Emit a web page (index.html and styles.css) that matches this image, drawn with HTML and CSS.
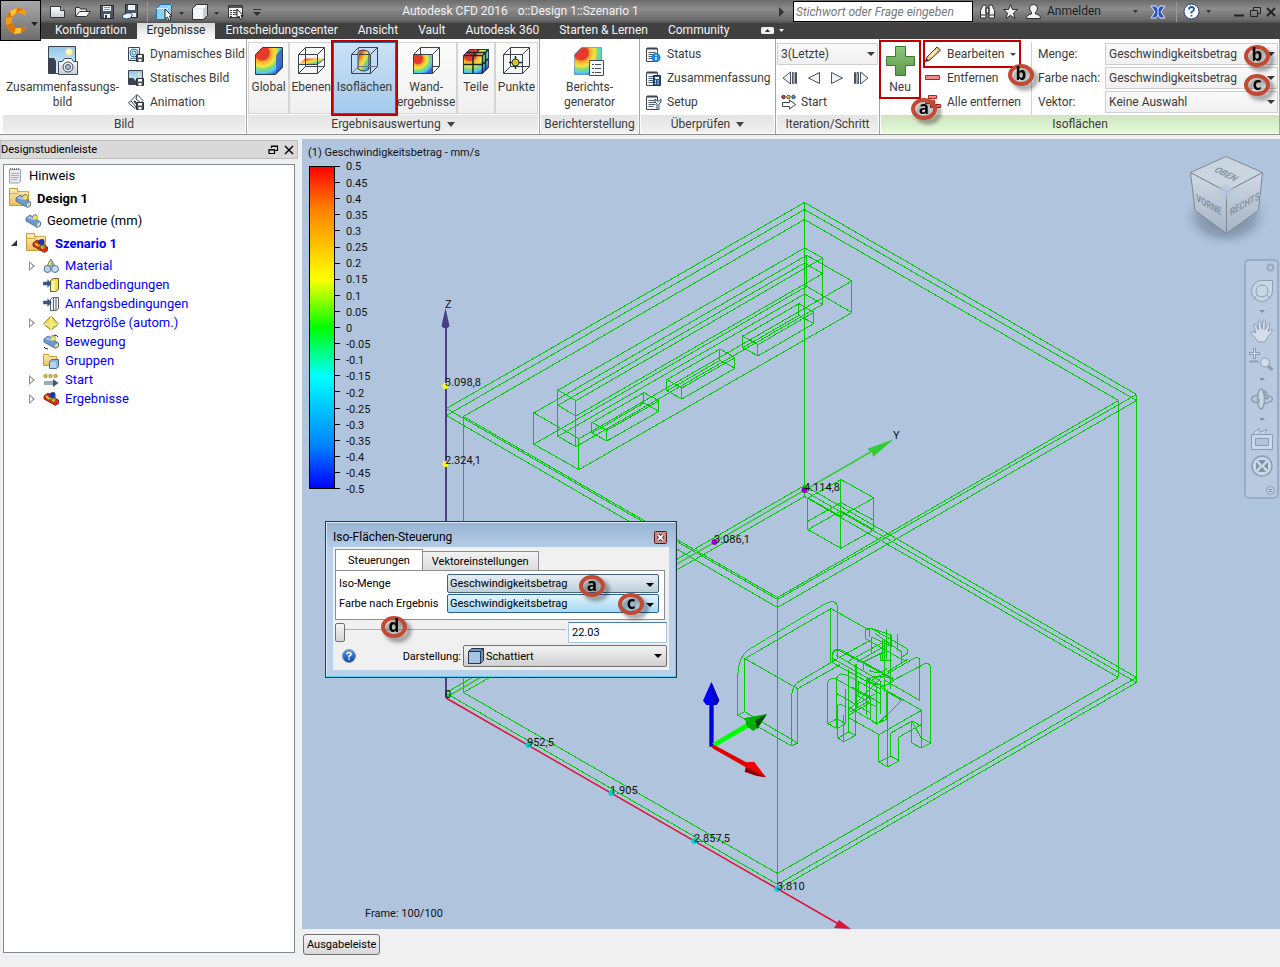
FILE: index.html
```html
<!DOCTYPE html>
<html lang="de">
<head>
<meta charset="utf-8">
<meta name="viewport" content="width=device-width, initial-scale=1">
<title>Autodesk CFD 2016</title>
<link rel="stylesheet" href="styles.css">
</head>
<body class="app">
<svg class="defs" aria-hidden="true">
  <defs>
    <linearGradient id="rainbow" x1="0" y1="0" x2="1" y2="1">
      <stop offset="0" stop-color="#f5a623"/><stop offset=".2" stop-color="#e8402c"/><stop offset=".38" stop-color="#ffb52b"/>
      <stop offset=".52" stop-color="#f4e542"/><stop offset=".66" stop-color="#7ad66f"/><stop offset=".8" stop-color="#4cc3ee"/><stop offset="1" stop-color="#2446c8"/>
    </linearGradient>
    <radialGradient id="heat" cx=".25" cy=".2" r="1">
      <stop offset="0" stop-color="#e5392b"/><stop offset=".25" stop-color="#e5392b"/><stop offset=".32" stop-color="#f7a828"/>
      <stop offset=".5" stop-color="#f6e545"/><stop offset=".62" stop-color="#7ddc74"/><stop offset=".74" stop-color="#55cdf0"/><stop offset=".9" stop-color="#2d62dc"/>
    </radialGradient>
    <linearGradient id="silver" x1="0" y1="0" x2="0" y2="1"><stop offset="0" stop-color="#fff"/><stop offset="1" stop-color="#c9ced4"/></linearGradient>
    <linearGradient id="sky" x1="0" y1="0" x2="0" y2="1"><stop offset="0" stop-color="#8fc6ea"/><stop offset="1" stop-color="#e9f5fb"/></linearGradient>
    <linearGradient id="leaf" x1="0" y1="0" x2="0" y2="1"><stop offset="0" stop-color="#8cc57c"/><stop offset="1" stop-color="#5d9a4b"/></linearGradient>
    <linearGradient id="folderfill" x1="0" y1="0" x2="0" y2="1"><stop offset="0" stop-color="#fdf0b9"/><stop offset="1" stop-color="#e9bf5c"/></linearGradient>
    <linearGradient id="legendfill" x1="0" y1="0" x2="0" y2="1">
      <stop offset="0" stop-color="#f00"/><stop offset=".13" stop-color="#ff8000"/><stop offset=".35" stop-color="#ff0"/><stop offset=".5" stop-color="#0f0"/>
      <stop offset=".65" stop-color="#0ff"/><stop offset=".87" stop-color="#0080ff"/><stop offset="1" stop-color="#00f"/>
    </linearGradient>
    <linearGradient id="cubefill" x1="0" y1="0" x2="0" y2="1"><stop offset="0" stop-color="#d0d9e4"/><stop offset="1" stop-color="#a6b4c5"/></linearGradient>
    <radialGradient id="cubeshadow"><stop offset="0" stop-color="#5c6b7d" stop-opacity=".9"/><stop offset=".6" stop-color="#74869b" stop-opacity=".55"/><stop offset="1" stop-color="#b0c4de" stop-opacity="0"/></radialGradient>
    <linearGradient id="question" x1="0" y1="0" x2="0" y2="1"><stop offset="0" stop-color="#5b9be8"/><stop offset="1" stop-color="#123fa5"/></linearGradient>
    <symbol id="disk" viewBox="0 0 8 8"><path d="M.5 .5h7v7h-7z" fill="#4a525c" stroke="#2c333d"/><path d="M2 1h4v2.500H2zM2.500 5h3v2.500h-3z" fill="#fff"/></symbol>
    <symbol id="notes" viewBox="0 0 16 16"><path d="M1.500 2.500h11v13h-11z" fill="#f4f4f4" stroke="#3c4450"/><path d="M3 1v3M5 1v3M7 1v3M9 1v3M11 1v3" stroke="#3c4450"/><path d="M3.500 6.500h7M3.500 8.500h7M3.500 10.500h7M3.500 12.500h5" stroke="#555e6b"/></symbol>
    <symbol id="folder" viewBox="0 0 23 22"><path d="M1.500 18.500v-17h8v3h11v14z" fill="url(#folderfill)" stroke="#c99a3c"/><path d="M2 6.500h8l1.500-2H20" fill="none" stroke="#d5aa50"/></symbol>
    <symbol id="part" viewBox="0 0 16 14"><path d="M1 4L5 1l3 2V1.500l2-1 2 1V6l3.500 2v3.500l-3 2L1 7z" fill="#6f98cf" stroke="#44628f" stroke-width=".8"/><path d="M8 2l2-1 2 1v3l-2 1-2-1z" fill="#f3e14a"/><path d="M12 10l3-2v3l-3 2z" fill="#f5e556"/><path d="M2 4l3-2 3 2v2z" fill="#a9c3e4"/></symbol>
    <symbol id="hotpart" viewBox="0 0 16 14"><path d="M1 4L5 1l3 2V1.500l2-1 2 1V6l3.500 2v3.500l-3 2L1 7z" fill="#df2b12" stroke="#6b1c10" stroke-width=".8"/><path d="M6 2l2-1.500h4V5l-2 1-3-1z" fill="#1734b8"/><path d="M5 5l3 1 1 2-3-1zM11 6l2 2-2 2-2-3z" fill="#48d657"/><path d="M3 4l2 1 1 2-2-1zM9 8l2 2" fill="#ffd52d" stroke="#ffd52d"/></symbol>
    <symbol id="bc" viewBox="0 0 16 14"><path d="M0 4.500h5V1.500l5 5-5 5V8.500H0z" fill="#37587a"/></symbol>
  </defs>
</svg>

<header class="shell">
  <button class="app-button" aria-label="Anwendungsmenü">
    <svg width="34" height="30" viewBox="0 0 34 30"><path d="M13 2l6 1 3 2v5l-5-3h-5l-4 4v6l4 5h5l5-2v3l-5 4-7 1-5-4-3-5V12l4-7z" fill="#f49a14"/><path d="M13 2l6 1-7 4-4 4-6 1 4-7zM8 17l4 5-2 6-5-4-3-5zM17 22l5-2v3l-5 4z" fill="#d8770b"/><path d="M6 5l7-3-1 5-4 4zM12 22h5v5l-7 1z" fill="#ffc132"/><path d="M27 16h7l-3.500 4z" fill="#222"/></svg>
  </button>
  <div class="titlebar">
    <div class="quick">
      <button aria-label="Neu"><svg width="18" height="16"><path d="M1.500 2.500h10l4 4v7h-14z" fill="url(#silver)" stroke="#333"/><path d="M11.500 2.500v4h4" fill="#bbb" stroke="#333"/></svg></button>
      <button aria-label="Öffnen"><svg width="18" height="16"><path d="M1.500 12.500v-9h4l1 1.500h6v3" fill="#e8e8e8" stroke="#333"/><path d="M1.500 12.500l4-5h11l-4 5z" fill="#f6f6f6" stroke="#333"/></svg></button>
      <button aria-label="Speichern"><svg width="16" height="16"><path d="M1.500 1.500h13v13h-13z" fill="#4b5663" stroke="#222b36"/><path d="M4 2h8v5H4zM5 10h6v4H5z" fill="#eef1f4"/><path d="M5 3.500h6M5 5.500h6" stroke="#8a929c"/><path d="M6 11h2v3H6z" fill="#333"/></svg></button>
      <button aria-label="Speichern unter"><svg width="18" height="16"><path d="M3.500 .500h12v13h-12z" fill="#4b5663" stroke="#222b36"/><path d="M6 1h7v5H6zM8 9h6v4H8z" fill="#eef1f4"/><path d="M.5 11l5-2h3l2 2-2 3-4 1-4-1z" fill="#e9f2fb" stroke="#1e4c79"/></svg></button>
      <span class="bar"></span>
      <button class="wide" aria-label="Auswahl"><svg width="28" height="18"><path d="M1.500 5.500l4-4h11v11l-4 4h-11z" fill="#8ed0f4" stroke="#1a6ea3"/><path d="M1.500 5.500h11v11M12.500 5.500l4-4" fill="none" stroke="#d6f0fd"/><path d="M10 6v10l2.500-2 1.500 3.500 2-1L14.500 13H17z" fill="#fff" stroke="#222"/><path d="M24 9h5l-2.500 3z" fill="#333"/></svg></button>
      <button class="wide" aria-label="Darstellung"><svg width="28" height="18"><path d="M1.500 5.500l4-4h11v11l-4 4h-11z" fill="#c9cdd2" stroke="#333"/><path d="M2 6h10v10H2z" fill="#f5f6f7"/><path d="M2 5.500l4-3.500h10l-3.500 3.500z" fill="#fff"/><path d="M23 9h5l-2.500 3z" fill="#333"/></svg></button>
      <button aria-label="Liste"><svg width="18" height="16"><path d="M1.500 1.500h14v12h-14z" fill="#f2f2f2" stroke="#333"/><path d="M2 3h13" stroke="#555" stroke-width="2"/><path d="M3 6.500h2M6 6.500h5M3 8.500h2M6 8.500h4M3 10.500h2M6 10.500h4M3 12.500h2" stroke="#444"/><path d="M10 5v9l2-2 1.500 3.500 2-1-1.500-3H16z" fill="#fff" stroke="#222"/></svg></button>
      <button aria-label="Anpassen"><svg width="10" height="12"><path d="M1 3.500h8" stroke="#333"/><path d="M1 6h8L5 10z" fill="#333"/></svg></button>
    </div>
    <h1 class="caption"><span>Autodesk CFD 2016</span><span>o::Design 1::Szenario 1</span></h1>
    <div class="info">
      <svg width="6" height="10"><path d="M0 0l5 5-5 5z" fill="#333"/></svg>
      <input class="search" type="text" placeholder="Stichwort oder Frage eingeben" aria-label="Suche">
      <button aria-label="Suchen"><svg width="17" height="17"><path d="M1.500 7.500L4 2h3v13H1.500zM15.500 7.500L13 2h-3v13h5.500zM7 5h3v5H7z" fill="#f3f3f3" stroke="#2c2c2c"/><path d="M2 12h5M10 12h5" stroke="#2c2c2c"/></svg></button>
      <button aria-label="Favoriten"><svg width="17" height="17"><path d="M8.500 1.500l2 5h5l-4 3.500 1.500 5.500-4.500-3.200L4 15.500 5.500 10l-4-3.500h5z" fill="#f3f3f3" stroke="#2c2c2c"/></svg></button>
      <button class="login"><svg width="17" height="17"><path d="M1.500 15.500q0-4 5-4.500v-1.500Q4.500 7.500 4.500 5q0-3.500 4-3.500t4 3.500q0 2.500-2 4.500V11q5 .500 5 4.500z" fill="#f3f3f3" stroke="#2c2c2c"/></svg>Anmelden</button>
      <svg width="5" height="4"><path d="M0 0h5L2.500 3z" fill="#333"/></svg>
      <button class="exchange" aria-label="Exchange"><svg width="16" height="14"><path d="M1 1h5l2 3 2-3h5l-4 6 4 6h-5l-2-3-2 3H1l4-6z" fill="#2c55b8" stroke="#dde6f8"/><path d="M8 4v6" stroke="#dde6f8"/></svg></button>
      <span class="bar"></span>
      <button aria-label="Hilfe"><svg width="17" height="17"><circle cx="8.500" cy="8.500" r="7.500" fill="#fff" stroke="#26406c"/><path d="M6 6.500q0-2.500 2.500-2.500T11 6.300q0 1.500-2.500 2.700v1.500M8.500 12v1.500" fill="none" stroke="#2257b8" stroke-width="1.800"/></svg></button>
      <svg width="5" height="4"><path d="M0 0h5L2.500 3z" fill="#333"/></svg>
      <div class="winbtns">
        <button aria-label="Minimieren"><svg width="12" height="12"><path d="M1 9.500h10" stroke="#222" stroke-width="2"/></svg></button>
        <button aria-label="Wiederherstellen"><svg width="13" height="12"><path d="M4.500 5V1.500h7v6H9M1.500 4.500h7v6h-7z" fill="none" stroke="#222"/></svg></button>
        <button aria-label="Schließen"><svg width="10" height="12"><path d="M1 2l8 8M9 2l-8 8" stroke="#222" stroke-width="2"/></svg></button>
      </div>
    </div>
  </div>
  <nav class="tabs" aria-label="Registerkarten">
    <button>Konfiguration</button>
    <button class="active">Ergebnisse</button>
    <button>Entscheidungscenter</button>
    <button>Ansicht</button>
    <button>Vault</button>
    <button>Autodesk 360</button>
    <button>Starten &amp; Lernen</button>
    <button>Community</button>
    <button class="toggle" aria-label="Multifunktionsleiste minimieren"><svg width="24" height="9"><rect x="0" y="1" width="13" height="7" rx="1.500" fill="#eee"/><path d="M4 6h5L6.500 3z" fill="#333"/><path d="M18 3h5l-2.500 3z" fill="#eee"/></svg></button>
  </nav>
</header>

<section class="ribbon" aria-label="Multifunktionsleiste">
  <div class="group">
    <div class="tools">
      <button class="big plain"><svg width="32" height="30"><path d="M1.500 .500h27v27h-27z" fill="url(#sky)" stroke="#39424e"/><circle cx="22" cy="6" r="3.500" fill="#fff7d0" stroke="#f1d66a"/><path d="M2 12h5l2 3v12H2z" fill="#39424e"/><path d="M11.500 15.500h4l2-3h7l2 3h4v13h-19z" fill="url(#silver)" stroke="#444c56"/><circle cx="21" cy="21" r="5" fill="#e8eef3" stroke="#444c56"/><circle cx="21" cy="21" r="2.500" fill="#a5c5dc" stroke="#444c56"/></svg>Zusammenfassungs-<br>bild</button>
      <div class="stack">
        <button class="small"><svg width="16" height="16"><path d="M.5 1.500h11v13H.5z" fill="#eaf3fa" stroke="#39424e"/><circle cx="6" cy="7" r="4" fill="none" stroke="#2f73ae"/><circle cx="6" cy="7" r="2" fill="none" stroke="#2f73ae"/><path d="M2 13q4-2 7 0" fill="none" stroke="#2f73ae"/><use href="#disk" x="8" y="8" width="8" height="8"/></svg>Dynamisches Bild</button>
        <button class="small"><svg width="16" height="16"><path d="M.5 .500h14v14H.5z" fill="url(#sky)" stroke="#39424e"/><circle cx="11" cy="4" r="1.500" fill="#ffe486"/><path d="M1 8h4l3 3v3H1z" fill="#39424e"/><use href="#disk" x="8" y="8" width="8" height="8"/></svg>Statisches Bild</button>
        <button class="small"><svg width="16" height="16"><path d="M.5 9L9 .500l6 6-8 8z" fill="#fff" stroke="#39424e"/><path d="M3 7l5 6M9 1l-1 4 5 4" fill="none" stroke="#39424e"/><path d="M6 7l3 3" stroke="#39424e" stroke-width="2"/><use href="#disk" x="8" y="8" width="8" height="8"/></svg>Animation</button>
      </div>
    </div>
    <h2 class="strip">Bild</h2>
  </div>

  <div class="group">
    <div class="tools joined">
      <button class="big"><svg width="30" height="30"><path d="M1.500 8.500l7-7h20v20l-7 7h-20z" fill="url(#heat)" stroke="#2d3a5c"/><path d="M22 9l6-7v19l-6 7z" fill="#2d54cc" opacity=".75"/></svg>Global</button>
      <button class="big"><svg width="30" height="30"><path d="M2.500 18.500l7-6h18l-7 6z" fill="url(#rainbow)"/><path d="M2.500 8.500l7-7h19l-7 7zM2.500 8.500v19h19v-19M28.500 1.500v19l-7 7M9.500 1.500v19h19M9.500 20.500l-7 7M2.500 18.500h19l7-6" fill="none" stroke="#3a4350"/></svg>Ebenen</button>
      <button class="big pressed"><svg width="30" height="30"><path d="M9 6q5-4 11 0v17q-5 4-11 0z" fill="url(#rainbow)" stroke="#33394a"/><path d="M2.500 8.500l7-7h19l-7 7zM2.500 8.500v19h19v-19M28.500 1.500v19l-7 7" fill="none" stroke="#3a4350"/><path d="M9.500 1.500v19h19M9.500 20.500l-7 7" fill="none" stroke="#6f7885"/></svg>Isoflächen</button>
      <button class="big"><svg width="30" height="30"><path d="M2 9h19v19H2z" fill="url(#heat)"/><path d="M2.500 8.500l7-7h19l-7 7zM2.500 8.500v19h19v-19M28.500 1.500v19l-7 7" fill="none" stroke="#3a4350"/><path d="M9.500 1.500v7M21.500 20.500h7" stroke="#3a4350"/></svg>Wand-<br>ergebnisse</button>
      <button class="big"><svg width="30" height="30"><path d="M2.500 9.500l6-6h19v18l-6 6h-19z" fill="url(#heat)" stroke="#2d3a5c"/><path d="M2.500 9.500h19v18M21.500 9.500l6-6M12 27V9.500l6-6M2.500 18.500h19l6-6M5.500 6.500h19v18" fill="none" stroke="#1e2633" stroke-width="1.500"/></svg>Teile</button>
      <button class="big"><svg width="30" height="30"><path d="M2.500 8.500l7-7h19l-7 7zM2.500 8.500v19h19v-19M28.500 1.500v19l-7 7M9.500 1.500v19h19M9.500 20.500l-7 7" fill="none" stroke="#3a4350"/><path d="M14.500 10v13M8 16.500h13" stroke="#222" stroke-width="1.500"/><circle cx="14.500" cy="16.500" r="3.500" fill="#c3e24a" stroke="#222"/><circle cx="14.500" cy="16.500" r="1.500" fill="#f39c1f"/></svg>Punkte</button>
    </div>
    <h2 class="strip drop">Ergebnisauswertung</h2>
  </div>

  <div class="group">
    <div class="tools center">
      <button class="big plain"><svg width="30" height="30"><path d="M.5 8.500l7-7h20v16l-7 11h-20z" fill="url(#heat)" stroke="#2d62dc" stroke-width=".5"/><path d="M15.500 14.500h14v15h-14z" fill="#f3f5f7" stroke="#444c56"/><path d="M18 18.500h2M21 18.500h6M18 22.500h2M21 22.500h6M18 26.500h2M21 26.500h6" stroke="#444c56"/></svg>Berichts-<br>generator</button>
    </div>
    <h2 class="strip">Berichterstellung</h2>
  </div>

  <div class="group">
    <div class="tools inset">
      <div class="stack">
        <button class="small"><svg width="16" height="16"><use href="#notes"/><circle cx="11" cy="11.500" r="4.500" fill="#1b87e6"/><path d="M11 9v1M11 11v3" stroke="#fff" stroke-width="1.500"/></svg>Status</button>
        <button class="small"><svg width="16" height="16"><use href="#notes"/><path d="M8.500 5.500h7v10h-7z" fill="#25508a" stroke="#1c3557"/><path d="M10 7h4v2h-4z" fill="#fff"/><path d="M10 11h1M12.500 11h1M10 13.500h1M12.500 13.500h1" stroke="#fff" stroke-width="1.500"/></svg>Zusammenfassung</button>
        <button class="small"><svg width="16" height="16"><use href="#notes"/><path d="M10 5v3l2 2v5.500h2V10l2-2V5l-1.500 2h-2z" fill="#e3edf8" stroke="#34506f"/></svg>Setup</button>
      </div>
    </div>
    <h2 class="strip drop">Überprüfen</h2>
  </div>

  <div class="group">
    <div class="tools iter">
      <div class="stack">
        <span class="select"><select aria-label="Iteration"><option>3(Letzte)</option></select></span>
        <div class="play">
          <button aria-label="Schritt zurück"><svg width="16" height="14"><path d="M8.500 1v12L1 7zM10.500 1.500h1.500v11h-1.500zM13.500 1.500h1v11h-1z" fill="#f1f3f5" stroke="#4a525d"/></svg></button>
          <button aria-label="Rückwärts"><svg width="14" height="14"><path d="M12.500 1.500v11L1.500 7z" fill="#f1f3f5" stroke="#4a525d"/></svg></button>
          <button aria-label="Vorwärts"><svg width="14" height="14"><path d="M1.500 1.500v11L12.500 7z" fill="#f1f3f5" stroke="#4a525d"/></svg></button>
          <button aria-label="Schritt vor"><svg width="16" height="14"><path d="M7.500 1v12L15 7zM1.500 1.500h1v11h-1zM4 1.500h1.500v11H4z" fill="#f1f3f5" stroke="#4a525d"/></svg></button>
        </div>
        <button class="small"><svg width="16" height="16"><circle cx="2.500" cy="3" r="1.800" fill="#d9382a" stroke="#333" stroke-width=".8"/><circle cx="7.500" cy="3" r="1.800" fill="#f2c230" stroke="#333" stroke-width=".8"/><circle cx="12.500" cy="3" r="1.800" fill="#3c9ad8" stroke="#333" stroke-width=".8"/><path d="M1.500 8.500h7V6l6 4.500-6 4.500v-2.500h-7z" fill="#fff" stroke="#39424e"/></svg>Start</button>
      </div>
    </div>
    <h2 class="strip">Iteration/Schritt</h2>
  </div>

  <div class="group context">
    <div class="tools iso">
      <button class="big plain marked"><svg width="30" height="32"><path d="M10.500 1.500h10v10h9v9h-9v10h-10v-10h-9v-9h9z" fill="url(#leaf)" stroke="#3c7a2c"/></svg>Neu</button>
      <div class="stack">
        <button class="small marked edit"><svg width="16" height="16"><path d="M.5 15.500l1.500-4.500 10-10 3.500 3-10.500 10z" fill="#e6c690" stroke="#3b3b3b"/><path d="M10 3l3.500 3" stroke="#3b3b3b"/><path d="M4 10l7-7 2 1.500-7 7z" fill="#ffe9b3"/><path d="M.5 15.500l1-3 2 2z" fill="#222"/></svg>Bearbeiten<i class="caret"></i></button>
        <button class="small"><svg width="16" height="16"><path d="M.5 5.500h14v4H.5z" fill="#f08a84" stroke="#b3201c"/></svg>Entfernen</button>
        <button class="small"><svg width="16" height="16"><path d="M3.500 1.500h8v3h-8zM.5 6.500h9v3h-9zM5.500 10.500h10v3h-10z" fill="#f08a84" stroke="#b3201c"/></svg>Alle entfernen</button>
      </div>
      <div class="fields">
        <label for="menge">Menge:</label><span class="select"><select id="menge"><option>Geschwindigkeitsbetrag</option></select></span>
        <label for="farbe">Farbe nach:</label><span class="select"><select id="farbe"><option>Geschwindigkeitsbetrag</option></select></span>
        <label for="vektor">Vektor:</label><span class="select"><select id="vektor"><option>Keine Auswahl</option></select></span>
      </div>
      <span class="callout c-new">a</span>
      <span class="callout c-edit">b</span>
      <span class="callout c-menge">b</span>
      <span class="callout c-farbe">c</span>
    </div>
    <h2 class="strip">Isoflächen</h2>
  </div>
</section>

<main class="work">
  <aside class="side">
    <header class="dockhead"><h2>Designstudienleiste</h2>
      <button aria-label="Andocken"><svg width="10" height="10"><path d="M3.500 3V1h6v4.500H7M1 4.500h5.500v4H1zM3 1.500h6M1 5h6" fill="none" stroke="#000" stroke-width="1.200"/></svg></button>
      <button aria-label="Schließen"><svg width="10" height="10"><path d="M1 1l8 8M9 1L1 9" stroke="#000" stroke-width="1.500"/></svg></button>
    </header>
    <div class="treebox">
      <ul class="tree">
        <li><div class="row"><svg width="15" height="17"><path d="M1.500 2.500h11v12l-2 1.500h-9z" fill="#e6eaee" stroke="#9aa3ad"/><path d="M2 2h10" stroke="#6d7985" stroke-width="2" stroke-dasharray="1 1"/><path d="M3 6.500h8M3 8.500h8M3 10.500h8M3 12.500h6" stroke="#a9b3bf"/></svg>Hinweis</div></li>
        <li><div class="row folder"><svg width="23" height="22"><use href="#folder"/><use href="#part" x="7" y="7" width="16" height="14"/></svg>Design 1</div>
          <ul class="lvl">
            <li><div class="row"><i class="tw"></i><svg width="16" height="14"><use href="#part"/></svg>Geometrie (mm)</div></li>
            <li><div class="row folder link"><i class="tw open"></i><svg width="24" height="22"><use href="#folder" width="23" height="22"/><use href="#hotpart" x="7" y="7" width="16" height="14"/></svg>Szenario 1</div>
              <ul class="lvl deep">
                <li><div class="row link"><i class="tw shut"></i><svg width="16" height="16"><path d="M8 1l4 7H4z" fill="#e4e36d" stroke="#64806a"/><path d="M8 1v7l4 0z" fill="#86a9c9"/><circle cx="4.500" cy="11" r="3.500" fill="#b9d0e6" stroke="#50759b"/><circle cx="12" cy="11" r="3.500" fill="#cbdcea" stroke="#50759b"/></svg>Material</div></li>
                <li><div class="row link"><i class="tw"></i><svg width="16" height="14"><path d="M7.500 2.500l3-2h5v11l-3 2h-5z" fill="#f2df4b" stroke="#6a6330"/><path d="M8 3h4v10H8z" fill="#fbf3a0"/><use href="#bc" width="14" height="12"/></svg>Randbedingungen</div></li>
                <li><div class="row link"><i class="tw"></i><svg width="16" height="14"><path d="M7.500 2.500l2-2h6v11l-2 2h-6zM10.500 1v12M13 1v12" fill="#eef1f4" stroke="#5b6570"/><use href="#bc" width="14" height="12"/></svg>Anfangsbedingungen</div></li>
                <li><div class="row link"><i class="tw shut"></i><svg width="16" height="16"><path d="M8 1l7.500 8L8 15 .5 9z" fill="#efe04c" stroke="#857a24"/><path d="M8 1v14M.5 9L8 10l7.500-1" fill="none" stroke="#fff9b8"/></svg>Netzgröße (autom.)</div></li>
                <li><div class="row link"><i class="tw"></i><svg width="16" height="16"><use href="#part" y="1" width="16" height="14"/><path d="M11 1q3 0 4 2M1 13q1 2 4 2" fill="none" stroke="#222"/></svg>Bewegung</div></li>
                <li><div class="row link"><i class="tw"></i><svg width="16" height="16"><path d="M.5 12.500V1.500h5l1 2h7v9z" fill="url(#folderfill)" stroke="#c99a3c"/><path d="M6.500 8.500l2-2h7v7l-2 2h-7z" fill="#8fb3dd" stroke="#4d6f9d"/><path d="M7 9h6v6H7z" fill="#b9d1ec"/></svg>Gruppen</div></li>
                <li><div class="row link"><i class="tw shut"></i><svg width="16" height="14"><circle cx="2.500" cy="3" r="1.700" fill="#d8c93c" stroke="#857a24" stroke-width=".7"/><circle cx="7.500" cy="3" r="1.700" fill="#d8c93c" stroke="#857a24" stroke-width=".7"/><circle cx="12.500" cy="3" r="1.700" fill="#d8c93c" stroke="#857a24" stroke-width=".7"/><path d="M1 8.500h9V6l5.500 4-5.500 4v-2.500H1z" fill="#3a5b7d"/><path d="M1 10h9" stroke="#fff"/></svg>Start</div></li>
                <li><div class="row link"><i class="tw shut"></i><svg width="16" height="14"><use href="#hotpart"/></svg>Ergebnisse</div></li>
              </ul>
            </li>
          </ul>
        </li>
      </ul>
    </div>
  </aside>

  <div class="right">
    <section class="canvas" aria-label="3D-Ansicht">
      <svg class="scene" viewBox="302 139 978 790" preserveAspectRatio="xMinYMin slice">
        <!-- room -->
        <g class="wire">
          <path d="M446.500 408.500L804.500 202.500 1136.500 394.500M446.500 415.500L804.500 209.500 1136.500 400.500M463.500 416.500L804.500 219.500 1118.500 400.500"/>
          <path d="M446.500 408.500L777.500 599.500 1136.500 394.500M446.500 415.500L777.500 607.500 1136.500 400.500M463.500 416.500L777.500 597.500 1118.500 400.500"/>
          <path d="M446.500 408.500V698M463.500 416.500V693M777.500 597.500V889M804.500 202.500V496M1118.500 400.500V677M1136.500 394.500V683"/>
          <path d="M446.500 692.500L804.500 485.500 1136.500 677.500M463.500 692.500L804.500 496.500 1118.500 677.500M804.500 491L1136.500 682.500"/>
          <path d="M463.500 692.500L777.500 873.500 1118.500 677.500M447.500 694L777.500 884.500 1136.500 677.500M777.500 889.500L1136.500 682.500"/>
        </g>
        <!-- air conditioner -->
        <g class="wire" transform="translate(520.300 190.300) scale(.33333)">
          <path d="M41 668V762L176 838V745ZL859 195 995 272V367L176 838M41 762L859 288 995 367M176 745L995 272M859 195V288"/>
          <path d="M113 600V738L167 769V631ZL853 173 907 203V342L167 769M113 645L167 677 907 250 853 218ZM167 631L907 203M113 738L853 311 907 342"/>
          <path d="M215 697V728L260 752V720ZL371 607 416 632V663L260 752M260 720L416 632M215 728L371 638 416 663M371 607V638"/>
          <path d="M440 568V602L485 626V593ZL599 476 644 502V534L485 626M485 593L644 502M440 602L599 510 644 534M599 476V510"/>
          <path d="M668 438V472L713 497V463ZL836 340 881 366V400L713 497M713 463L881 366M668 472L836 375 881 400M836 340V375"/>
        </g>
        <!-- computer box and desk -->
        <g class="wire" transform="translate(680.300 470.300) scale(.33333)">
          <path d="M482 28L581 83 482 138 383 83ZV234L581 178V83M383 83V178L482 234M383 153L482 97 581 150M383 178L482 122 581 178"/>
          <path d="M173 735V610Q175 560 205 538L430 403Q468 382 472 412V565L362 630Q334 645 334 680V827L173 735 190 725"/>
          <path d="M194 725V565L452 415V575M194 565L352 655V818L334 827M194 725L352 818M352 655L480 583M452 415L565 478M452 575L600 655M457 570V548Q462 532 480 538L640 625"/>
        </g>
        <!-- chair -->
        <g class="wire" transform="translate(820.300 590.300) scale(.33333)">
          <path d="M298 330V205Q290 200 280 205L180 262M298 330L190 268M332 458V240Q332 215 312 221L215 272"/>
          <path d="M176 433V515L202 530 236 512V440L302 403M202 530V300M212 500V428L275 392 304 408M176 515L212 497 236 512M176 433L304 360V470M176 433L85 382M304 360L180 290M275 392V458L302 473 332 458 302 443Z"/>
          <path d="M23 275V400L50 415 75 400V295M23 275Q25 262 48 266L150 325M23 400L50 385 75 400M50 415V262Q55 245 78 254L180 310M53 345V443L70 455 106 435V220M53 345Q65 340 76 350M70 375V455M85 235V425M53 443L85 425 106 435M50 310L150 368"/>
          <path d="M135 145V120Q140 110 155 115L255 172Q268 180 260 190L245 200M135 145L240 205Q262 215 264 205M155 140V190M148 115V140M155 115L215 135V170L155 140M200 115V205M212 135V295M193 145V305M188 150V210M233 130V182M180 190V210H215M165 130L245 185V222"/>
          <path d="M38 215V190Q42 175 60 182L210 262M38 205L190 290M48 195L185 275M60 200L150 150M80 215L190 155M110 215L215 155M130 240V215L190 185M145 240Q175 255 200 235M200 245L264 205"/>
          <path d="M110 355V220M115 275V315M138 265V375M148 260V330M152 320V390M170 290V405M182 272V372M200 305V385M85 360L180 265M85 375L145 340M105 345L165 310M138 280L190 250M152 390L170 402 245 330 200 305M85 350L170 400 202 385M150 320L182 340M95 290L150 320M140 270Q175 245 220 270Q195 300 140 270M110 315L145 335M90 365L140 335 170 350"/>
        </g>
        <!-- axes -->
        <path d="M446 320V698" stroke="#483d8b" stroke-width="2"/><path d="M445.500 308l4 18-2 2h-4l-2-2z" fill="#483d8b"/>
        <path d="M446 697.500L880 446.500" stroke="#32cd32" stroke-width="1.500"/><path d="M894 439l-27 10 5 3 1 5z" fill="#32cd32"/>
        <path d="M446 698L842 926" stroke="#dc143c" stroke-width="1.500"/><path d="M834 928l5-8 12 9z" fill="#dc143c"/>
        <g fill="#ff0"><circle cx="445.500" cy="386" r="3"/><circle cx="445.500" cy="464" r="3"/></g>
        <g fill="#9400d3"><circle cx="804.500" cy="490" r="3"/><circle cx="714.500" cy="542" r="3"/></g>
        <g fill="#00ced1"><circle cx="528.500" cy="745" r="3"/><circle cx="611.500" cy="793" r="3"/><circle cx="694.500" cy="841" r="3"/><circle cx="777.500" cy="889" r="3"/></g>
        <g class="mark">
          <text x="445" y="308">Z</text><text x="893" y="439">Y</text>
          <text x="445" y="386">3.098,8</text><text x="445" y="464">2.324,1</text>
          <text x="804" y="491">4.114,8</text><text x="714" y="543">3.086,1</text>
          <text x="445" y="698">0</text><text x="527" y="746">952,5</text><text x="610" y="794">1.905</text><text x="694" y="842">2.857,5</text><text x="777" y="890">3.810</text>
          <text x="365" y="917">Frame: 100/100</text>
          <text x="308" y="156">(1) Geschwindigkeitsbetrag - mm/s</text>
        </g>
        <!-- triad -->
        <g transform="translate(680 470) scale(.33333)">
          <path d="M88 700h13v130H88z" fill="#0000d8"/><path d="M94 636l24 56-9 13H79l-10-13z" fill="#00f"/><path d="M94 636l24 56-9 13h-9z" fill="#0000b4"/>
          <path d="M97 820l108-64 8 13-108 62z" fill="#0f0"/><path d="M261 732l-66 12 5 25 20 14 15-12z" fill="#00b000"/><path d="M261 732l-35 18 5 28z" fill="#044a0a"/>
          <path d="M92 828l8 8 105 60 7-12-108-58z" fill="#e00000"/><path d="M258 922l-36-47-22 2-6 28z" fill="#f00000"/><path d="M258 922l-28-4-36-13 6-14z" fill="#8d0000"/>
        </g>
        <!-- legend -->
        <rect x="309.500" y="166.500" width="25" height="322" fill="url(#legendfill)" stroke="#000"/>
        <path class="ticks" d="M335 166.500h5m-5 16.100h5m-5 16.100h5m-5 16.100h5m-5 16.100h5m-5 16.100h5m-5 16.100h5m-5 16.100h5m-5 16.100h5m-5 16.100h5m-5 16.100h5m-5 16.100h5m-5 16.100h5m-5 16.100h5m-5 16.100h5m-5 16.100h5m-5 16.100h5m-5 16.100h5m-5 16.100h5m-5 16.100h5m-5 16.100h5"/>
        <g class="mark">
          <text x="346" y="170">0.5</text><text x="346" y="187">0.45</text><text x="346" y="203">0.4</text><text x="346" y="219">0.35</text><text x="346" y="235">0.3</text><text x="346" y="251">0.25</text><text x="346" y="267">0.2</text><text x="346" y="283">0.15</text><text x="346" y="300">0.1</text><text x="346" y="316">0.05</text><text x="346" y="332">0</text>
          <text x="346" y="348">-0.05</text><text x="346" y="364">-0.1</text><text x="346" y="380">-0.15</text><text x="346" y="397">-0.2</text><text x="346" y="413">-0.25</text><text x="346" y="429">-0.3</text><text x="346" y="445">-0.35</text><text x="346" y="461">-0.4</text><text x="346" y="477">-0.45</text><text x="346" y="493">-0.5</text>
        </g>
      </svg>

      <svg class="cube" width="100" height="100" viewBox="0 0 100 100" role="img" aria-label="ViewCube">
        <ellipse cx="50" cy="62" rx="46" ry="32" fill="url(#cubeshadow)"/>
        <path d="M14.500 17.500L50.500 36.500V78.500L19 55.500z" fill="url(#cubefill)" stroke="#7e8995"/>
        <path d="M86.500 17.500L50.500 36.500V78.500L82.500 55.500z" fill="url(#cubefill)" stroke="#7e8995"/>
        <path d="M50 1.500L86.500 17.500 50.500 36.500 14.500 17.500z" fill="#cbd5e0" stroke="#7e8995"/>
        <path d="M43 33l7-4 7 4v7l-7 4-7-4z" fill="#b7c6de" opacity=".7"/>
        <g class="facetext"><text transform="translate(20 46) rotate(30) skewX(30)">VORNE</text><text transform="translate(54 61) rotate(-30) skewX(-30)">RECHTS</text><text transform="translate(37 16) rotate(26) skewX(-28)">OBEN</text></g>
      </svg>

      <div class="navbar">
        <svg class="tiny" width="9" height="9"><circle cx="4.500" cy="4.500" r="4" fill="#9aabc2"/><path d="M3 3l3 3M6 3L3 6" stroke="#dbe4ef"/></svg>
        <button aria-label="Navigationsrad"><svg width="24" height="24"><path d="M12 1.500h10.500V12A10.500 10.500 0 1 1 12 1.500z" fill="#c9d6e6" stroke="#8d9db3"/><circle cx="12" cy="12" r="6" fill="none" stroke="#8d9db3"/><path d="M7 16l-3 4M17 16l3 4" stroke="#8d9db3"/></svg></button>
        <i class="caret"></i>
        <button aria-label="Pan"><svg width="24" height="24"><path d="M6 14L3.500 6q1.500-2 2.500 0l2.500 5L8 2q1.500-2 2.500 0l1.500 8 1-8.500q1.500-1.500 2.500.5l-.5 8.500 3-6q2-1 2 1l-2 7 3-2q2 0 1 2l-4 5-3 5.500H8.500L4 17.500 .5 14q1-2 3-1z" fill="#d3deea" stroke="#8d9db3"/></svg></button>
        <button aria-label="Zoom"><svg width="25" height="24"><path d="M5.500 1v11M0 6.500h11" stroke="#8d9db3" stroke-width="3"/><path d="M5.500 2v9M1 6.500h9" stroke="#d3deea"/><path d="M.5 14.500h9" stroke="#8d9db3" stroke-width="2"/><circle cx="16" cy="15.500" r="4.500" fill="#d3deea" stroke="#8d9db3"/><path d="M19 19l4.500 4" stroke="#8d9db3" stroke-width="3"/></svg></button>
        <i class="caret"></i>
        <button aria-label="Orbit"><svg width="24" height="24"><ellipse cx="12" cy="12" rx="10.500" ry="4.500" fill="none" stroke="#8d9db3" stroke-width="1.500"/><ellipse cx="11" cy="12" rx="3.500" ry="10" fill="#c9d6e6" stroke="#8d9db3" stroke-width="1.500"/><path d="M15 3v5M12.500 5.500h5M17 9v4M15 11h4M9 11v5" stroke="#8d9db3" stroke-width="1.500"/></svg></button>
        <i class="caret"></i>
        <button aria-label="Ansicht"><svg width="24" height="24"><path d="M3 6.500l6-5v4l8-3-2 4" fill="#d3deea" stroke="#8d9db3"/><path d="M1.500 7.500h21v15h-21z" fill="#cbd8e7" stroke="#8d9db3"/><path d="M5.500 11.500h13v7h-13z" fill="#b3c4da" stroke="#8d9db3"/></svg></button>
        <button aria-label="Einpassen"><svg width="22" height="22"><circle cx="11" cy="11" r="10" fill="#cbd8e7" stroke="#8d9db3" stroke-width="1.500"/><path d="M7 5h8l-4 5zM7 17h8l-4-5zM5 7v8l4-4zM17 7v8l-4-4z" fill="#8292a8"/></svg></button>
        <svg class="tiny end" width="9" height="9"><circle cx="4.500" cy="4.500" r="4" fill="#c5d2e2" stroke="#8d9db3"/><path d="M2.500 3.500h4M2.500 5.500h4" stroke="#7f90a7"/></svg>
      </div>

      <form class="dialog" aria-label="Iso-Flächen-Steuerung">
        <header><h2>Iso-Flächen-Steuerung</h2><button type="button" class="close" aria-label="Schließen"><svg width="13" height="13"><rect x=".5" y=".5" width="12" height="12" rx="1" fill="#c98c8a" stroke="#55181a"/><path d="M4 4l5 5M9 4L4 9" stroke="#3d2224" stroke-width="3.400"/><path d="M4 4l5 5M9 4L4 9" stroke="#fff" stroke-width="1.800"/></svg></button></header>
        <div class="sheet">
          <div class="subtabs"><button type="button" class="on">Steuerungen</button><button type="button">Vektoreinstellungen</button></div>
          <div class="pane">
            <label for="isomenge">Iso-Menge</label><span class="select glass"><select id="isomenge"><option>Geschwindigkeitsbetrag</option></select></span>
            <label for="isofarbe">Farbe nach Ergebnis</label><span class="select glass hot"><select id="isofarbe"><option>Geschwindigkeitsbetrag</option></select></span>
          </div>
          <div class="value"><input type="range" min="0" max="100" value="0" aria-label="Iso-Wert"><input type="text" value="22.03" aria-label="Wert"></div>
          <div class="look">
            <button type="button" aria-label="Hilfe"><svg width="14" height="14"><circle cx="7" cy="7" r="6.500" fill="url(#question)" stroke="#7b93bd"/><path d="M5 5.500Q5 3.500 7 3.500t2 1.700q0 1-2 2v1.300M7 9.500V11" fill="none" stroke="#fff" stroke-width="1.500"/></svg></button>
            <label for="darst">Darstellung:</label>
            <span class="select glass grey"><svg width="16" height="16"><path d="M.5 3.500l3-3h12v12l-3 3H.5z" fill="#6f94bd" stroke="#23364d"/><path d="M1 4h11v11H1z" fill="#a9c4e2"/><path d="M12.500 3.500v12M.5 3.500h12l3-3" fill="none" stroke="#23364d"/></svg><select id="darst"><option>Schattiert</option></select></span>
          </div>
        </div>
        <span class="callout d-a">a</span>
        <span class="callout d-c">c</span>
        <span class="callout d-d">d</span>
      </form>
    </section>
    <footer class="dock"><button>Ausgabeleiste</button></footer>
  </div>
</main>
</body>
</html>
```
FILE: styles.css
```css
* { box-sizing: border-box; }
.app {
  margin: 0; min-height: 100vh; display: flex; flex-direction: column;
  background: #f0f0f0; color: #3b3b3b;
  font: 12px/15px Roboto, "Noto Sans", sans-serif;
}
.defs { position: absolute; width: 0; height: 0; }
button { border: 0; padding: 0; margin: 0; background: none; font: inherit; color: inherit; display: inline-flex; align-items: center; justify-content: center; white-space: nowrap; }
h1, h2 { margin: 0; font: inherit; white-space: nowrap; }
ul { margin: 0; padding: 0; list-style: none; }
input, select { font: inherit; color: inherit; margin: 0; border-radius: 0; min-width: 0; }
svg { flex: none; display: block; overflow: visible; }
.caret { border: 3px solid transparent; border-top-color: #444; border-bottom: 0; }

/* title bar and tabs */
.shell { display: grid; grid-template-columns: 41px 1fr; grid-template-rows: 23px 16px; background: #404040; }
.app-button { grid-row: 1 / 3; height: 41px; border: 1px solid #000; background: linear-gradient(#a8a8a8, #6d6d6d); z-index: 2; }
.titlebar { display: flex; align-items: center; background: linear-gradient(#6b6b6b, #8c8c8c 9px, #6a6a6a 20px, #505050 23px); padding-left: 8px; }
.quick { display: flex; align-items: center; gap: 7px; }
.quick .wide { margin-right: 1px; }
.bar { width: 1px; height: 20px; background: #999; }
.caption { flex: 1; display: flex; justify-content: center; gap: 10px; color: #f2f2f2; }
.info { display: flex; align-items: center; gap: 6px; height: 22px; }
.search { width: 180px; height: 21px; border: 1px solid #000; background: #fff; padding: 0 2px; }
.search::placeholder { color: #777; font-style: italic; opacity: 1; }
.login { gap: 5px; color: #1c1c1c; }
.exchange { padding: 0 4px; }
.info > svg { margin-right: 2px; }
.login + svg { margin-left: 26px; }
.winbtns { display: flex; gap: 4px; margin: 0 4px 0 14px; }
.tabs { display: flex; align-items: stretch; padding-left: 4px; color: #f4f4f4; }
.tabs button { padding: 0 10px 2px; }
.tabs .active { background: linear-gradient(#d8d8d8, #fff); color: #2b2b2b; }
.tabs .toggle { padding-left: 22px; }

/* ribbon */
.ribbon { display: grid; grid-template-columns: 247fr 293fr 100fr 136fr 104fr 400fr; height: 96px; background: #fff; border-bottom: 1px solid #8e8e8e; }
.group { display: flex; flex-direction: column; min-width: 0; border-right: 1px solid #a5a5a5; padding: 3px 1px 1px; }
.group:first-child { padding-left: 3px; }
.context { padding-right: 0; }
.tools { flex: 1; display: flex; align-items: stretch; position: relative; }
.strip { height: 18px; display: flex; align-items: center; justify-content: center; background: linear-gradient(#e4e4e4, #f0f0f0); line-height: 18px; }
.context .strip { background: linear-gradient(#cfe3bf, #e5fbd8); }
.drop::after { content: ""; border: 4px solid transparent; border-top: 5px solid #444; border-bottom: 0; margin-left: 6px; }
.big { flex-direction: column; justify-content: flex-start; padding: 3px 2px 0; line-height: 15px; border: 1px solid #d4d4d4; background: linear-gradient(#fbfbfb, #f0f0f0); }
.big svg { margin-bottom: 4px; }
.big.plain { border-color: transparent; background: none; }
.joined { display: grid; grid-template-columns: 41fr 44fr 62fr 61fr 38fr 43fr; }
.joined .big { height: 72px; padding-left: 0; padding-right: 0; }
.big.pressed { background: linear-gradient(#cbe1f6, #a5caec); border: 1px solid #2767a5; outline: 2px solid #c00000; z-index: 1; }
.center { justify-content: center; }
.stack { display: grid; grid-template-rows: repeat(3, 24px); align-items: center; justify-items: start; margin-left: 6px; }
.small { gap: 6px; height: 24px; }
.inset .stack { margin-left: 4px; }
.iter .stack { margin: 0; width: 100%; }
.iter .small { margin-left: 4px; gap: 4px; }
.play { display: flex; align-items: center; justify-content: space-between; padding: 0 9px 0 5px; width: 100%; }
.select { position: relative; display: flex; align-items: center; width: 100%; height: 22px; border: 1px solid #cfcfcf; background: linear-gradient(#fafafa, #f0f0f0); }
.select select { appearance: none; border: 0; background: none; flex: 1; width: 100%; height: 100%; padding: 0 12px 0 3px; }
.select::after { content: ""; position: absolute; right: 2px; top: 8px; border: 4px solid transparent; border-top-color: #3a3a3a; border-bottom: 0; pointer-events: none; }
.marked { outline: 2px solid #c00000; }
.iso .big { width: 38px; height: 55px; padding-top: 2px; }
.iso .big svg { margin-bottom: 3px; }
.iso .stack { margin-left: 6px; }
.edit { width: 94px; justify-content: flex-start; }
.edit .caret { margin-left: auto; margin-right: 4px; }
.fields { flex: 1; display: grid; grid-template-columns: 67px 1fr; grid-template-rows: repeat(3, 24px); align-items: center; margin-left: 10px; padding: 0 1px 0 6px; border-left: 1px solid #d0d0d0; }

/* lettered annotations */
.callout { position: absolute; width: 26px; height: 22px; border: 4px solid #c04a33; border-radius: 50%; color: #000; font: bold 17px/12px "Open Sans", sans-serif; text-align: center; filter: drop-shadow(4px 4px 2px rgba(0, 0, 0, .45)); z-index: 3; }
.c-new { left: 30px; top: 56px; }
.c-edit { left: 127px; top: 22px; }
.c-menge { right: 9px; top: 3px; }
.c-farbe { right: 9px; top: 32px; }

/* side bar */
.work { flex: 1; display: grid; grid-template-columns: 302px 1fr; padding-top: 4px; }
.side { display: flex; flex-direction: column; padding: 1px 4px 14px 0; }
.dockhead { display: flex; align-items: center; gap: 6px; height: 19px; background: #d9d9d9; border: 1px solid #bcbcbc; padding: 0 3px 0 0; color: #000; font-size: 11px; }
.dockhead h2 { flex: 1; }
.treebox { flex: 1; margin: 5px 3px 0 3px; border: 1px solid #828790; background: #fff; color: #000; font-size: 13px; }
.tree { padding-left: 4px; }
.row { display: flex; align-items: center; gap: 6px; height: 21px; white-space: nowrap; }
.folder { height: 24px; font-weight: bold; }
.link { color: #00f; }
.lvl { padding-left: 1px; }
.deep { padding: 1px 0 0 18px; }
.deep .row { height: 19px; }
.tw { position: relative; width: 10px; }
.tw.open::before { content: ""; display: block; width: 0; margin-left: 2px; border-left: 6px solid transparent; border-bottom: 6px solid #333; }
.tw.shut::before { content: ""; display: block; width: 0; margin-left: 2px; border: 5px solid transparent; border-left: 6px solid #8f8f8f; border-right: 0; }
.tw.shut::after { content: ""; position: absolute; left: 3px; top: 2px; border: 3px solid transparent; border-left: 3px solid #fff; border-right: 0; }

/* 3D view */
.right { display: flex; flex-direction: column; min-width: 0; }
.canvas { flex: 1; position: relative; overflow: hidden; background: #b0c4de; }
.scene { position: absolute; inset: 0; width: 100%; height: 100%; }
.wire path { fill: none; stroke: #00cc00; stroke-width: 1px; vector-effect: non-scaling-stroke; shape-rendering: crispEdges; }
.mark { font: 11px Roboto, sans-serif; fill: #111; }
.ticks { stroke: #000; shape-rendering: crispEdges; }
.cube { position: absolute; right: 4px; top: 16px; }
.facetext { font: bold 9px Roboto, sans-serif; fill: #8793a1; }
.navbar { position: absolute; right: 1px; top: 120px; width: 35px; height: 240px; border: 2px solid #9badc6; border-radius: 5px; background: #b9c9df; display: flex; flex-direction: column; align-items: center; padding-top: 2px; }
.navbar .caret { border-top-color: #8292a8; margin: 7px 0 6px; }
.navbar button + button { margin-top: 4px; }
.tiny { align-self: flex-end; margin: 0 2px 7px; }
.tiny.end { margin: auto 2px 2px; }
.dock { height: 38px; padding: 5px 1px; }
.dock button { height: 21px; padding: 0 3px; border: 1px solid #707070; border-radius: 3px; background: linear-gradient(#f4f4f4, #d8d8d8); color: #000; font-size: 11px; }

/* dialog */
.dialog { position: absolute; left: 23px; top: 382px; width: 352px; padding: 0 7px 7px 7px; border: 1px solid #2b3947; box-shadow: inset -1px -1px #56d0f0, inset 1px 1px #dceaf8; background: linear-gradient(#97b3d3, #b9d1ea 30px); color: #000; font-size: 11px; }
.dialog header { display: flex; align-items: center; justify-content: space-between; height: 25px; padding-top: 6px; font-size: 12px; }
.dialog .close { margin-right: 2px; }
.sheet { background: #f0f0f0; padding: 2px 2px 3px; }
.subtabs { display: flex; align-items: flex-end; }
.subtabs button { height: 19px; padding: 0 9px; border: 1px solid #8c8e94; border-bottom: 0; border-left: 0; background: linear-gradient(#f3f3f3, #dcdcdc); }
.subtabs .on { height: 21px; padding: 0 12px; border-left: 1px solid #8c8e94; background: #fff; }
.pane { display: grid; grid-template-columns: 108px 1fr; row-gap: 1px; align-items: center; margin-right: 2px; padding: 3px 5px 6px 3px; border: 1px solid #8c8e94; background: #fff; }
.select.glass { height: 19px; border: 1px solid #41617c; border-radius: 2px; background: linear-gradient(#e6edf2, #bfcfda); }
.select.hot { border-color: #2c628b; background: linear-gradient(#e3f4fd, #a5d9f5); }
.select.grey { height: 22px; border-color: #707070; background: linear-gradient(#f3f3f3, #d0d0d0); padding-left: 4px; }
.glass select { padding-left: 2px; }
.glass::after { right: 4px; border-top-color: #000; }
.value { display: grid; grid-template-columns: 1fr 99px; gap: 2px; margin-top: 2px; }
.value input[type="text"] { height: 21px; border: 1px solid #a8c6e2; border-top-color: #4c7fb0; background: #fff; padding: 0 3px; color: #000; }
.value input[type="range"] { appearance: none; width: 100%; height: 21px; background: linear-gradient(#b0b0b0, #b0b0b0) 0 7px / 100% 1px no-repeat; }
.value input[type="range"]::-webkit-slider-thumb { appearance: none; width: 10px; height: 19px; border: 1px solid #707070; border-radius: 2px; background: linear-gradient(#f6f6f6, #d4d4d4); }
.look { display: grid; grid-template-columns: 28px 1fr 204px; align-items: center; margin-top: 2px; }
.look label { text-align: right; padding-right: 2px; }
.d-a { left: 253px; top: 53px; }
.d-c { left: 292px; top: 71px; }
.d-d { left: 55px; top: 94px; }
```
